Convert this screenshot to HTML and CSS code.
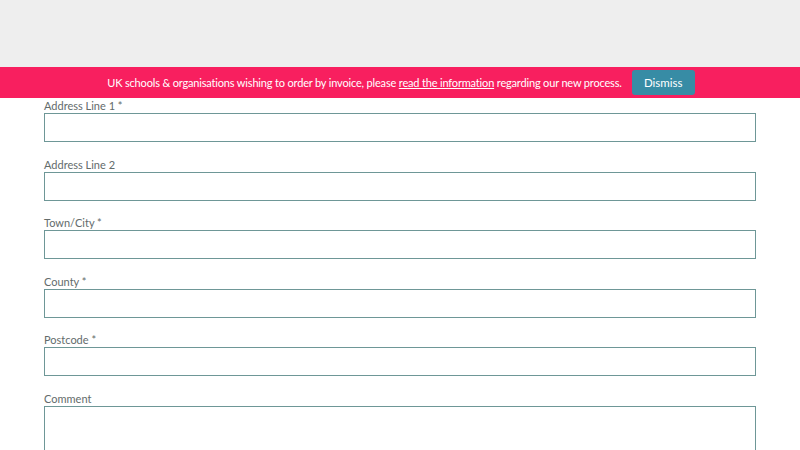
FILE: index.html
```html
<!DOCTYPE html>
<html lang="en">
<head>
<meta charset="utf-8">
<title>Address</title>
<link rel="stylesheet" href="styles.css">
</head>
<body>
<header class="top"></header>
<div class="notice">
  <p class="notice-text">UK schools &amp; organisations wishing to order by invoice, please <a href="#" class="notice-link">read the information</a> regarding our new process.</p>
  <button class="dismiss" type="button">Dismiss</button>
</div>
<form class="form">
  <div class="field">
    <label class="label">Address Line 1 *</label>
    <input class="input" type="text">
  </div>
  <div class="field">
    <label class="label">Address Line 2</label>
    <input class="input" type="text">
  </div>
  <div class="field">
    <label class="label">Town/City *</label>
    <input class="input" type="text">
  </div>
  <div class="field">
    <label class="label">County *</label>
    <input class="input" type="text">
  </div>
  <div class="field">
    <label class="label">Postcode *</label>
    <input class="input" type="text">
  </div>
  <div class="field">
    <label class="label">Comment</label>
    <textarea class="textarea"></textarea>
  </div>
</form>
</body>
</html>
```
FILE: styles.css
```css
* { box-sizing: border-box; }
html, body { margin: 0; padding: 0; }
body {
  background: #ffffff;
  font-family: Lato, "Open Sans", "Liberation Sans", sans-serif;
  color: #5f6a6a;
  overflow: hidden;
  height: 450px;
}
.top {
  height: 67px;
  background: #eeeeee;
}
.notice {
  height: 31px;
  background: #f81f5f;
  display: flex;
  align-items: center;
  justify-content: center;
  gap: 10px;
  padding-left: 2px;
}
.notice-text {
  margin: 0;
  color: #ffffff;
  font-size: 11px;
  letter-spacing: -0.17px;
}
.notice-link {
  color: #ffffff;
  text-decoration: underline;
}
.dismiss {
  height: 25px;
  width: 63px;
  border: none;
  border-radius: 3px;
  background: #378ca5;
  color: #ffffff;
  font-family: Lato, "Open Sans", "Liberation Sans", sans-serif;
  font-size: 11.5px;
  padding: 0;
}
.form {
  padding: 0 44px;
  display: flex;
  flex-direction: column;
  gap: 14.6px;
}
.field {
  display: flex;
  flex-direction: column;
}
.label {
  font-size: 11px;
  line-height: 15px;
  color: #636b6b;
}
.input {
  height: 29px;
  border: 1px solid #6e9797;
  border-radius: 0;
  background: #fff;
  margin: 0;
}
.textarea {
  height: 80px;
  border: 1px solid #6e9797;
  border-radius: 0;
  resize: none;
  margin: 0;
}
```
